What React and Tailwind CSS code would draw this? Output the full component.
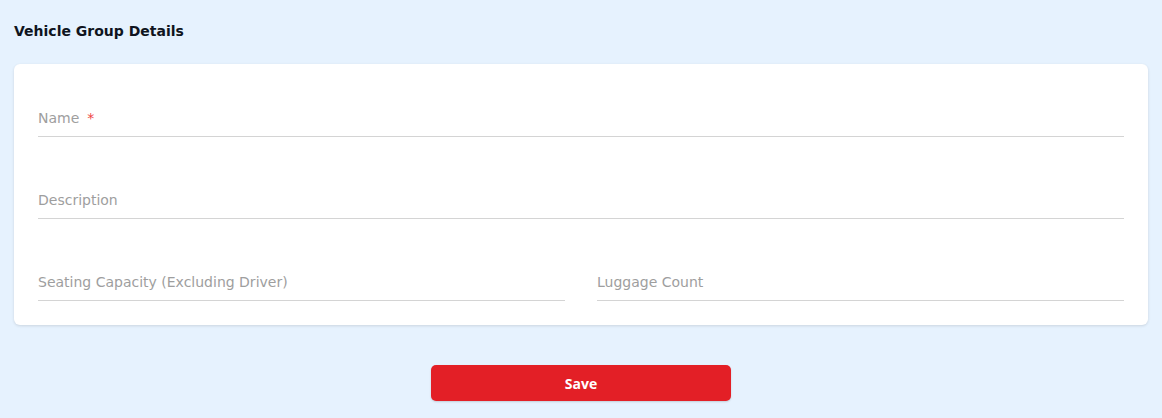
import React from 'react'

const Field = ({ label, required }) => (
  <div className="border-b border-[#d4d4d4] pb-[8px]">
    <div className="flex h-5 items-center text-[14px] text-[#9e9e9e] font-['DejaVu_Sans',sans-serif]">
      {label}
      {required && <span className="ml-2 text-[#ef4444]">*</span>}
    </div>
  </div>
)

const App = () => {
  return (
    <div className="min-h-[418px] w-full bg-[#e6f2fe] px-[14px] pt-[21px] font-['Open_Sans',sans-serif]">
      {/* :HEADER */}
      <h2 className="h-5 text-[14px] font-bold leading-5 text-[#0f1420] font-['DejaVu_Sans',sans-serif]">
        Vehicle Group Details
      </h2>

      {/* :CARD */}
      <div className="mt-[23px] flex flex-col gap-[53px] rounded-md bg-white px-6 pt-[44px] pb-6 shadow-[0_1px_3px_rgba(0,0,0,0.12)]">
        <Field label="Name" required />
        <Field label="Description" />
        <div className="grid grid-cols-2 gap-8">
          <Field label="Seating Capacity (Excluding Driver)" />
          <Field label="Luggage Count" />
        </div>
      </div>

      {/* :ACTIONS */}
      <div className="mt-[40px] flex justify-center">
        <button className="h-9 w-[300px] rounded-[5px] bg-[#e31f26] text-[14px] font-bold text-white shadow-[0_1px_2px_rgba(0,0,0,0.15)]">
          Save
        </button>
      </div>
    </div>
  )
}

export default App
